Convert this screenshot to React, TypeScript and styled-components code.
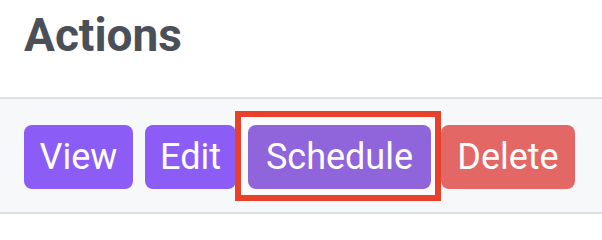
import styled, { createGlobalStyle } from 'styled-components'

const GlobalStyle = createGlobalStyle`
  html, body {
    margin: 0;
    padding: 0;
    background: #ffffff;
    font-family: Roboto, 'Liberation Sans', Arial, sans-serif;
  }
`

const Page = styled.div`
  width: 602px;
  height: 218px;
  overflow: hidden;
  background: #ffffff;
`

const Title = styled.h2`
  margin: 0;
  padding: 8px 24px 34px;
  font-size: 46px;
  line-height: 55px;
  font-weight: 700;
  color: #4b5058;
`

const ActionBar = styled.div`
  display: flex;
  align-items: center;
  padding: 26px 24px 23px;
  background: #f7f8fa;
  border-top: 2px solid #dde0e5;
  border-bottom: 2px solid #dde0e5;
`

const ButtonSlot = styled.div<{ gap: number }>`
  position: relative;
  margin-right: ${(p) => p.gap}px;
`

const ActionButton = styled.button<{ color: string; width: number }>`
  display: block;
  width: ${(p) => p.width}px;
  height: 64px;
  padding: 0;
  border: none;
  border-radius: 8px;
  background: ${(p) => p.color};
  color: #ffffff;
  font-family: Roboto, 'Liberation Sans', Arial, sans-serif;
  font-size: 36px;
  line-height: 64px;
  font-weight: 400;
  text-align: center;
  cursor: pointer;
`

const Highlight = styled.div`
  position: absolute;
  left: -13px;
  top: -14px;
  width: 206px;
  height: 90px;
  box-sizing: border-box;
  border: 6px solid #e8402a;
  pointer-events: none;
  z-index: 0;
`

const HighlightFill = styled.div`
  position: absolute;
  inset: 0;
  background: #fbfbfc;
`

const actions = [
  { label: 'View', color: '#8b5cf6', width: 109, gap: 12 },
  { label: 'Edit', color: '#8b5cf6', width: 91, gap: 12 },
  { label: 'Schedule', color: '#9064db', width: 183, gap: 10, highlighted: true },
  { label: 'Delete', color: '#e36865', width: 134, gap: 0 },
]

export default function App() {
  return (
    <Page>
      <GlobalStyle />
      <Title>Actions</Title>
      <ActionBar>
        {actions.map((a) => (
          <ButtonSlot key={a.label} gap={a.gap}>
            {a.highlighted && (
              <Highlight>
                <HighlightFill />
              </Highlight>
            )}
            <ActionButton color={a.color} width={a.width} style={{ position: 'relative' }}>
              {a.label}
            </ActionButton>
          </ButtonSlot>
        ))}
      </ActionBar>
    </Page>
  )
}
